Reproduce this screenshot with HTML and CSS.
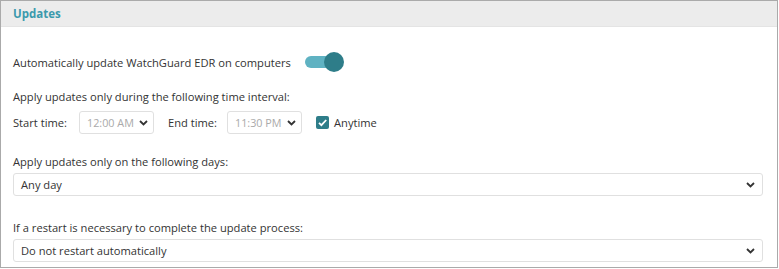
FILE: index.html
```html
<!DOCTYPE html>
<html lang="en">
<head>
    <meta charset="UTF-8">
    <title>Updates</title>
    <link rel="stylesheet" href="styles.css">
</head>
<body>

<div class="panel">
    <div class="panel-header">
        <h2>Updates</h2>
    </div>
    <div class="panel-body">
        <div class="toggle-row">
            <span>Automatically update WatchGuard EDR on computers</span>
            <span class="toggle"><span class="knob"></span></span>
        </div>

        <p class="label first">Apply updates only during the following time interval:</p>
        <div class="time-row">
            <span class="time-label">Start time:</span>
            <div class="select small disabled">
                <span>12:00 AM</span>
                <svg class="chev" width="9" height="6" viewBox="0 0 9 6"><path d="M1 1l3.5 3.5L8 1" fill="none" stroke="#333" stroke-width="1.8"/></svg>
            </div>
            <span class="time-label end-label">End time:</span>
            <div class="select small disabled">
                <span>11:30 PM</span>
                <svg class="chev" width="9" height="6" viewBox="0 0 9 6"><path d="M1 1l3.5 3.5L8 1" fill="none" stroke="#333" stroke-width="1.8"/></svg>
            </div>
            <label class="check">
                <span class="box">
                    <svg width="13" height="13" viewBox="0 0 13 13"><path d="M3 6.8l2.4 2.4L10.2 4" fill="none" stroke="#fff" stroke-width="1.8"/></svg>
                </span>
                Anytime
            </label>
        </div>

        <p class="label days">Apply updates only on the following days:</p>
        <div class="select wide">
            <span>Any day</span>
            <svg class="chev" width="9" height="6" viewBox="0 0 9 6"><path d="M1 1l3.5 3.5L8 1" fill="none" stroke="#333" stroke-width="1.8"/></svg>
        </div>

        <p class="label restart">If a restart is necessary to complete the update process:</p>
        <div class="select wide">
            <span>Do not restart automatically</span>
            <svg class="chev" width="9" height="6" viewBox="0 0 9 6"><path d="M1 1l3.5 3.5L8 1" fill="none" stroke="#333" stroke-width="1.8"/></svg>
        </div>
    </div>
</div>

</body>
</html>
```

FILE: styles.css
```css
body {
    margin: 0;
    padding: 0;
    background-color: #fff;
    font-family: "Open Sans", Arial, sans-serif;
    font-size: 11.15px;
    color: #333;
}
.panel {
    width: 778px;
    height: 268px;
    box-sizing: border-box;
    border: 1px solid #aaa;
    overflow: hidden;
}
.panel-header {
    height: 25px;
    background-color: #ececec;
    border-bottom: 1px solid #e4e4e4;
    padding-left: 12px;
    display: flex;
    align-items: center;
}
.panel-header h2 {
    margin: 0;
    font-size: 11.5px;
    font-weight: bold;
    color: #3b9aad;
}
.panel-body {
    padding: 0 15px 0 12px;
}
.toggle-row {
    display: flex;
    align-items: center;
    height: 20px;
    margin-top: 25px;
}
.toggle {
    position: relative;
    width: 31px;
    height: 12px;
    margin-left: 14px;
    background-color: #5fb2c2;
    border-radius: 6px;
}
.toggle .knob {
    position: absolute;
    left: 19px;
    top: -4px;
    width: 20px;
    height: 20px;
    border-radius: 50%;
    background-color: #2e7d89;
}
.label {
    margin: 0;
    line-height: 18px;
}
.label.first {
    margin-top: 16px;
}
.label.days {
    margin-top: 19px;
}
.label.restart {
    margin-top: 23px;
}
.time-row {
    display: flex;
    align-items: center;
    margin-top: 5px;
    height: 23px;
}
.time-label {
    width: 66px;
}
.end-label {
    margin-left: 14px;
    width: 59px;
}
.select {
    box-sizing: border-box;
    height: 23px;
    border: 1px solid #e0e0e0;
    border-radius: 3px;
    display: flex;
    align-items: center;
    justify-content: space-between;
    padding: 0 7px;
    background-color: #fff;
    white-space: nowrap;
}
.select.small {
    width: 75px;
    padding: 0 5px 0 7px;
}
.select.disabled span {
    color: #aaa;
    font-size: 10.8px;
}
.select.wide {
    width: 750px;
    margin-top: 2px;
}
.check {
    display: flex;
    align-items: center;
    margin-left: 14px;
}
.check .box {
    width: 13px;
    height: 13px;
    border-radius: 2px;
    background-color: #2e7d89;
    margin-right: 5px;
    display: flex;
}
```
